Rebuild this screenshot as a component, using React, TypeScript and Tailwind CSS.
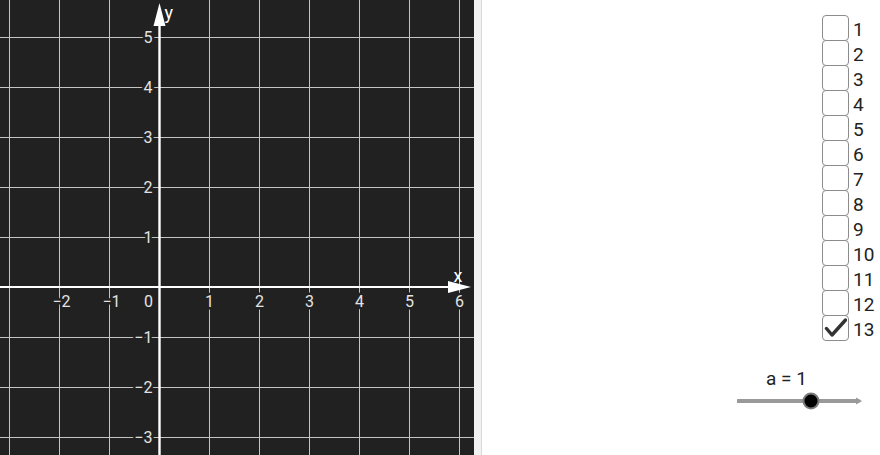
import React from 'react'

const BG = '#212121'
const GRID = '#c4c4c4'
const LABEL = '#e4e4e4'

const gridXs = [9.5, 59.5, 109.5, 209.5, 259.5, 309.5, 359.5, 409.5, 459.5]
const gridYs = [37.5, 87.5, 137.5, 187.5, 237.5, 337.5, 387.5, 437.5]

const xLabels = [
  { t: '−2', x: 61.5 },
  { t: '−1', x: 111.5 },
  { t: '1', x: 209.5 },
  { t: '2', x: 259.5 },
  { t: '3', x: 309.5 },
  { t: '4', x: 359.5 },
  { t: '5', x: 409.5 },
  { t: '6', x: 459.5 },
]

const yLabels = [
  { t: '5', y: 37.5 },
  { t: '4', y: 87.5 },
  { t: '3', y: 137.5 },
  { t: '2', y: 187.5 },
  { t: '1', y: 237.5 },
  { t: '−1', y: 337.5 },
  { t: '−2', y: 387.5 },
  { t: '−3', y: 437.5 },
]

function Graph() {
  return (
    <svg width="474" height="455" className="block shrink-0" style={{ fontFamily: 'Roboto, "Liberation Sans", sans-serif' }}>
      <rect width="474" height="455" fill={BG} />
      {gridXs.map((x) => (
        <line key={'gx' + x} x1={x} y1="0" x2={x} y2="455" stroke={GRID} strokeWidth="1" />
      ))}
      {gridYs.map((y) => (
        <line key={'gy' + y} x1="0" y1={y} x2="474" y2={y} stroke={GRID} strokeWidth="1" />
      ))}
      {/* axes */}
      <line x1="159.5" y1="20" x2="159.5" y2="455" stroke="#fff" strokeWidth="2.4" />
      <line x1="0" y1="287" x2="452" y2="287" stroke="#fff" strokeWidth="2.2" />
      <polygon points="159.5,3 153.5,26 165.5,26" fill="#fff" />
      <polygon points="471,287 448,281 448,293" fill="#fff" />
      <g fontSize="16" fill={LABEL} stroke={BG} strokeWidth="5" paintOrder="stroke" strokeLinejoin="round">
        {yLabels.map((l) => (
          <text key={'yl' + l.t} x="152.5" y={l.y + 5.5} textAnchor="end">
            {l.t}
          </text>
        ))}
        {xLabels.map((l) => (
          <text key={'xl' + l.t} x={l.x} y="306.5" textAnchor="middle">
            {l.t}
          </text>
        ))}
        <text x="148.5" y="306.5" textAnchor="middle">0</text>
      </g>
      <text x="164.5" y="19" fontSize="18" fill="#fff">y</text>
      <text x="453.5" y="282" fontSize="18" fill="#fff">x</text>
    </svg>
  )
}

function CheckRow({ n, checked }: { n: number; checked?: boolean }) {
  return (
    <div className="flex h-[25px] items-start">
      <div className="relative h-[26px] w-[27px] shrink-0 rounded-[4px] border-[1.5px] border-[#8c8c8c] bg-white">
        {checked ? (
          <svg width="24" height="23" className="absolute left-0 top-0">
            <path d="M3.5 12.5 L9 19 L22.5 4" fill="none" stroke="#333" strokeWidth="3.4" strokeLinecap="round" strokeLinejoin="round" />
          </svg>
        ) : null}
      </div>
      <span className="ml-[4px] text-[19px] leading-[30px] text-[#222]">{n}</span>
    </div>
  )
}

function Slider() {
  return (
    <div className="ml-[255px] mt-[28px] w-[128px]">
      <div className="ml-[29px] text-[19px] leading-[21px] text-[#222]">a = 1</div>
      <svg width="128" height="22" className="mt-[2px] block">
        <line x1="1" y1="10" x2="121" y2="10" stroke="#999" strokeWidth="4" strokeLinecap="round" />
        <polygon points="125,10 119,6.5 119,13.5" fill="#999" />
        <circle cx="74" cy="10" r="8.5" fill="#7a7a7a" />
        <circle cx="74" cy="10" r="6.5" fill="#000" />
      </svg>
    </div>
  )
}

export default function App() {
  return (
    <div className="flex h-[455px] w-[880px] overflow-hidden bg-white" style={{ fontFamily: 'Roboto, "Liberation Sans", sans-serif' }}>
      <Graph />
      <div className="w-[7px] shrink-0 bg-[#f2f2f2]" />
      <div className="w-px shrink-0 bg-[#d8d8d8]" />
      <div className="flex flex-1 flex-col">
        <div className="ml-[340px] mt-[15px] flex flex-col">
          {Array.from({ length: 13 }, (_, i) => (
            <CheckRow key={i} n={i + 1} checked={i === 12} />
          ))}
        </div>
        <Slider />
      </div>
    </div>
  )
}
